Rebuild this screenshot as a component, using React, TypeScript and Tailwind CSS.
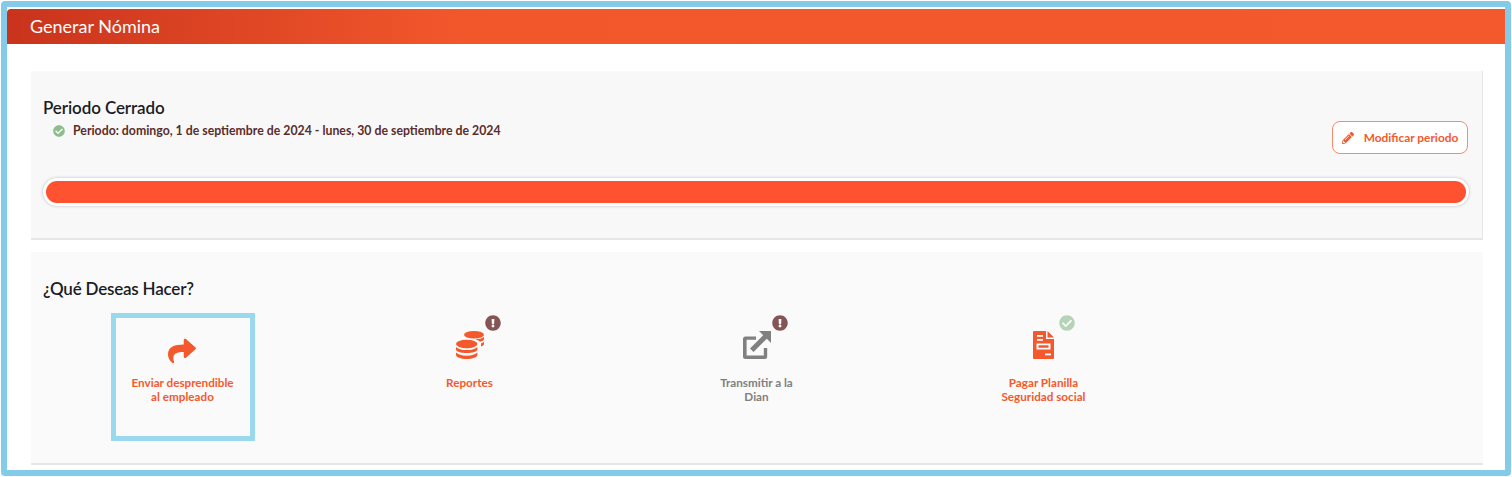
import { FaCheckCircle, FaExclamationCircle, FaPencilAlt, FaShare } from "react-icons/fa";

function CoinsIcon() {
  return (
    <svg viewBox="0 0 28 28" className="w-7 h-7" fill="#f4592d">
      <ellipse cx="18" cy="3.800" rx="10" ry="3.800" />
      <path d="M19 8.300c3.800-.1 7-.9 9-2.300v2.300c0 1-1.500 2-4 2.500-1-1-2.800-1.900-5-2.500zM25 12.500c1.300-.5 3-1.300 3-2.300v2.800c0 1-1.300 1.900-3 2.500z" />
      <ellipse cx="10.700" cy="13" rx="10.700" ry="4.200" />
      <path d="M0 16c1.800 2 5.800 3.100 10.700 3.100S19.600 18 21.400 16v2.400c0 2-4.700 3.600-10.700 3.600S0 20.400 0 18.400zM0 21.600c1.800 2 5.800 3.100 10.700 3.100s8.900-1.100 10.700-3.100v2.400c0 2.300-4.700 4-10.700 4S0 26.300 0 24z" />
    </svg>
  );
}

function SendIcon() {
  return (
    <svg viewBox="0 0 28 28" className="w-7 h-7" fill="#808080">
      <path d="M13 5.500v3.300H3.600v15.600h17.200V17h3.400v8.500a2.500 2.500 0 0 1-2.500 2.500H2.500A2.500 2.500 0 0 1 0 25.500V8a2.500 2.500 0 0 1 2.500-2.500z" />
      <path d="M16 0h12v12l-4.200-4.200L10.500 21 7 17.500 20.200 4.200z" />
    </svg>
  );
}

function DocIcon() {
  return (
    <svg viewBox="0 0 21 28" className="w-[21px] h-7" fill="#f4592d">
      <path d="M1 0h12v8h8v19a1 1 0 0 1-1 1H1a1 1 0 0 1-1-1V1a1 1 0 0 1 1-1z" />
      <path d="M14.500 0L21 6.500h-6.500z" />
      <g fill="#fafafa">
        <rect x="4" y="4" width="6" height="1.800" />
        <rect x="4" y="8" width="6" height="1.800" />
        <path d="M3.500 12.500h14v6h-14zm2 1.800v2.400h10v-2.400z" />
        <rect x="12" y="22.500" width="6" height="1.800" />
      </g>
    </svg>
  );
}

const actions = [
  { label: ["Enviar desprendible", "al empleado"], icon: <FaShare className="w-7 h-7 text-[#f4592d] translate-y-1.5 -translate-x-px" />, active: true, color: "text-[#f4592d]" },
  { label: ["Reportes"], icon: <CoinsIcon />, badge: "warn", color: "text-[#f4592d]" },
  { label: ["Transmitir a la", "Dian"], icon: <SendIcon />, badge: "warn", color: "text-[#808080]" },
  { label: ["Pagar Planilla", "Seguridad social"], icon: <DocIcon />, badge: "ok", color: "text-[#f4592d]" },
];

export default function App() {
  return (
    <div className="ml-px mt-px w-[1510px] h-[475px] border-[6px] border-[#84cbea] rounded-sm bg-white pt-0.5 font-['Lato','Open_Sans',sans-serif]">
      <div className="h-[35px] flex items-center pl-[23px] text-white text-[18px] bg-gradient-to-r from-[#c9331c] via-[#f2572c] via-30% to-[#f4592d] rounded-tl-sm">
        Generar Nómina
      </div>

      <div className="ml-6 mr-[22px] mt-[27px] h-[169px] bg-[#f8f8f8] border-b-2 border-r border-[#e6e6e6] pl-3 pr-[14px] pt-[27px]">
        <div className="flex justify-between">
          <div>
            <h2 className="text-[17px] leading-5 font-semibold text-[#1c1c24] tracking-[-0.1px]">Periodo Cerrado</h2>
            <div className="flex items-center gap-2 ml-2.5 mt-[5px]">
              <FaCheckCircle className="w-3 h-3 text-[#8fbc8f]" />
              <span className="text-[12.3px] leading-4 font-bold text-[#5a2d2d]">
                Periodo: domingo, 1 de septiembre de 2024 - lunes, 30 de septiembre de 2024
              </span>
            </div>
          </div>
          <button className="mt-[23px] w-[136px] h-[33px] flex items-center justify-center gap-2.5 bg-white border border-[#f98a6c] rounded-lg text-[11.9px] font-bold text-[#f4592d]">
            <FaPencilAlt className="w-3 h-3" />
            Modificar periodo
          </button>
        </div>
        <div className="mt-6 -mr-px h-7 rounded-full bg-white p-[3px] shadow-[0_0_3px_rgba(0,0,0,0.25)]">
          <div className="h-full rounded-full bg-[#ff5230]" />
        </div>
      </div>

      <div className="ml-6 mr-[22px] mt-3 h-[213px] bg-[#fafafa] border-b-2 border-[#e6e6e6] px-3 pt-[27px]">
        <h2 className="text-[17px] leading-5 font-semibold text-[#1c1c24] tracking-[-0.2px]">¿Qué Deseas Hacer?</h2>
        <div className="flex mt-[14px] -ml-1">
          {actions.map((a) => (
            <div key={a.label[0]} className="w-[287px]">
              <div className={`mx-auto w-[144px] h-[128px] flex flex-col items-center pt-[13px] border-[5px] ${a.active ? "border-[#9ad8ee]" : "border-transparent"}`}>
                <div className="relative h-7 flex items-start">
                  {a.icon}
                  {a.badge === "warn" && (
                    <FaExclamationCircle className="absolute -top-4 -right-[17px] w-4 h-4 text-[#855555]" />
                  )}
                  {a.badge === "ok" && (
                    <FaCheckCircle className="absolute -top-4 -right-[21px] w-4 h-4 text-[#b5d3b5]" />
                  )}
                </div>
                <div className={`mt-4 text-[11.7px] leading-[14px] font-bold text-center ${a.color}`}>
                  {a.label.map((l) => (
                    <div key={l}>{l}</div>
                  ))}
                </div>
              </div>
            </div>
          ))}
        </div>
      </div>
    </div>
  );
}
